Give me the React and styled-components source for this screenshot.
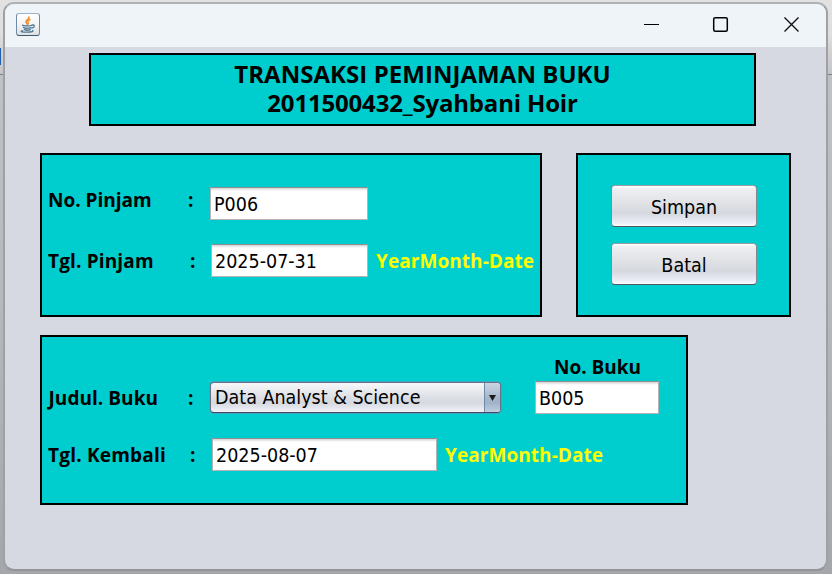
import React from "react";
import styled, { createGlobalStyle } from "styled-components";

const Global = createGlobalStyle`
  * { box-sizing: border-box; }
  body { margin: 0; }
`;

const Desktop = styled.div`
  width: 832px;
  height: 574px;
  overflow: hidden;
  padding: 2px 4px 3px 3px;
  background:
    linear-gradient(#1f5fae, #1f5fae) 0 48px / 1px 17px no-repeat,
    linear-gradient(to bottom, #e2e2e2 0, #dedede 36px, #d2d2d3 50px, #c4c5c8 74px, #7d8085 74px, #7d8085 75px, #c0c1c4 75px, #b7b8ba 300px, #a5a6a9 574px);
`;

const Window = styled.div`
  width: 825px;
  height: 569px;
  border: 2px solid;
  border-color: #b0b1b2 #a0a1a4 #939498 #a0a1a4;
  border-radius: 11px;
  background: #d6d9e1;
  overflow: hidden;
`;

const TitleBar = styled.header`
  height: 43px;
  padding: 0 26px 2px 11px;
  background: #eff4f9;
  display: flex;
  align-items: center;
  justify-content: space-between;
`;

const AppIcon = styled.div`
  width: 24px;
  height: 23px;
  margin-bottom: 1px;
  border: 1px solid #6f8ba6;
  border-top-color: #9db3cc;
  border-bottom-color: #3c5a72;
  border-radius: 3px;
  background: linear-gradient(to bottom, #fff, #f4f4f4 50%, #e0e0e0);
`;

const Controls = styled.div`
  display: grid;
  grid-template-columns: 15px 15px 17px;
  column-gap: 54px;
  align-items: center;

  svg:last-child { margin-left: 1px; }
`;

const Content = styled.main`
  padding: 6px 35px 0 35px;
`;

const Panel = styled.section`
  width: ${(p) => p.$w}px;
  height: ${(p) => p.$h}px;
  border: 2px solid #000;
  background: #00cdcd;
`;

const Heading = styled(Panel)`
  margin: 0 0 27px 49px;
  padding-top: 4px;
`;

const TopRow = styled.div`
  display: flex;
  gap: 34px;
  margin-bottom: 18px;
`;

const FormPanel = styled(Panel)`
  padding: ${(p) => p.$top}px 0 0 6px;
`;

const Row = styled.div`
  display: flex;
  align-items: flex-start;
  height: ${(p) => p.$h}px;
`;

const Bold = styled.span`
  font: 700 ${(p) => p.$size || 19}px / ${(p) => p.$line || 28}px "Open Sans", "Noto Sans", sans-serif;
  letter-spacing: ${(p) => p.$track || 0}px;
  white-space: pre;
  color: #000;
`;

const TitleLine = styled(Bold)`
  display: block;
  text-align: center;
`;

const Label = styled(Bold)`
  width: ${(p) => p.$w}px;
  margin-top: ${(p) => p.$mt || 0}px;
  padding-left: ${(p) => p.$pl || 0}px;
`;

const Hint = styled(Label)`
  color: #ff0;
  margin-left: 8px;
`;

const Regular = styled.span`
  font: 400 19.5px / 28px "DejaVu Sans Condensed", "DejaVu Sans", sans-serif;
  white-space: pre;
  color: #000;
`;

const Field = styled.div`
  width: ${(p) => p.$w}px;
  height: 33px;
  margin-top: ${(p) => p.$mt || 0}px;
  padding: 3px 3px 0;
  border: 1px solid #b5b3b5;
  border-top-color: #8f8f92;
  background: linear-gradient(to bottom, #d4d4d6 0, #fff 3px);
`;

const Combo = styled.div`
  width: 291px;
  height: 31px;
  margin-top: 1px;
  display: flex;
  justify-content: space-between;
  border: 1px solid #6e7085;
  border-bottom-color: #454760;
  border-radius: 4px;
  box-shadow: 0 0 0 1px #3fa5c6;
  overflow: hidden;
  padding-left: 4px;
  background: linear-gradient(to bottom, #f8f8fa, #dcdfe5 50%, #d5d8df 68%, #f0f2f8);
`;

const ComboText = styled(Regular)`
  padding-top: 1px;
`;

const ComboArrow = styled.div`
  width: 16px;
  display: flex;
  align-items: center;
  justify-content: center;
  border-left: 1px solid #7289a6;
  background: linear-gradient(to bottom, #cbd5e2, #a5b7cb 50%, #9fb2c7 68%, #bdcfe2);
`;

const BookNo = styled.div`
  display: flex;
  flex-direction: column;
  margin: -30px 0 0 34px;
`;

const Actions = styled(Panel)`
  padding: 30px 0 0 33px;
  display: flex;
  flex-direction: column;
  gap: 16px;
`;

const Button = styled.button`
  width: 146px;
  height: 42px;
  padding: 3px 0 0;
  border: 1px solid #85888f;
  border-top-color: #9b9da2;
  border-bottom-color: #54575f;
  border-radius: 4px;
  background: linear-gradient(to bottom, #fff 0, #eeeff2 8%, #dfe1e5 45%, #d5d8df 68%, #eef1f9 94%, #fff);
`;

function JavaIcon() {
  return (
    <AppIcon>
      <svg width="22" height="21" viewBox="0 0 22 21" fill="none" strokeLinecap="round" display="block">
        <path d="M11.900 3.200c1 2-3.600 3-2.800 5 .3.8 1.300 1.200 1.300 2.300" stroke="#ee8a2c" strokeWidth="1.700" />
        <path d="M13.200 5.600c-2 .8-2.700 1.500-2 2.600.6.9.3 1.400-.3 2" stroke="#ee8a2c" strokeWidth="1.200" />
        <path d="M5.800 11.200c-1.200.8 8 .9 9.200 0M6.600 13.500c1 1 6 1 7.400 0M7.600 15.600c1 .9 4 .9 5.600 0" stroke="#4f7896" strokeWidth="1.400" />
        <path d="M15.200 11.100c2.800-.9 2.900 2.200-.4 3.100" stroke="#4f7896" strokeWidth="1.300" />
        <path d="M5.800 16.600c-4.400 1.300 1 1.700 4.800 1.600 4-.1 6.600-.8 5-1.700" stroke="#4f7896" strokeWidth="1.200" />
      </svg>
    </AppIcon>
  );
}

export default function App() {
  return (
    <>
      <Global />
      <Desktop>
        <Window>
          <TitleBar>
            <JavaIcon />
            <Controls>
              <svg width="15" height="15" viewBox="1 0 15 15" overflow="visible"><path d="M0 7.500h15" stroke="#000" /></svg>
              <svg width="15" height="15" viewBox="1 0 15 15" fill="none" overflow="visible">
                <rect x="0.700" y="0.700" width="13.600" height="13.600" rx="1.500" stroke="#000" strokeWidth="1.500" />
              </svg>
              <svg width="17" height="17" viewBox="1 0 17 17" overflow="visible"><path d="M1.500 1.500l14 14M15.500 1.500l-14 14" stroke="#111" strokeWidth="1.400" /></svg>
            </Controls>
          </TitleBar>
          <Content>
            <Heading $w={667} $h={73}>
              <TitleLine $size={24} $line={29} $track={0.05}>TRANSAKSI PEMINJAMAN BUKU</TitleLine>
              <TitleLine $size={24} $line={29} $track={-0.18}>2011500432_Syahbani Hoir</TitleLine>
            </Heading>
            <TopRow>
              <FormPanel $w={502} $h={164} $top={31}>
                <Row $h={57}>
                  <Label $w={140}>No. Pinjam</Label>
                  <Label $w={22}>:</Label>
                  <Field $w={158} $mt={1}><Regular>P006</Regular></Field>
                </Row>
                <Row $h={57}>
                  <Label $w={142} $track={0.15} $mt={4}>Tgl. Pinjam</Label>
                  <Label $w={21} $mt={4}>:</Label>
                  <Field $w={157} $mt={1}><Regular>2025-07-31</Regular></Field>
                  <Hint $mt={4} $track={0.06}>YearMonth-Date</Hint>
                </Row>
              </FormPanel>
              <Actions $w={215} $h={164}>
                <Button><Regular>Simpan</Regular></Button>
                <Button><Regular>Batal</Regular></Button>
              </Actions>
            </TopRow>
            <FormPanel $w={648} $h={170} $top={44}>
              <Row $h={57}>
                <Label $w={140} $pl={0.5} $mt={3} $track={0.05}>Judul. Buku</Label>
                <Label $w={22} $mt={3}>:</Label>
                <Combo>
                  <ComboText>Data Analyst &amp; Science</ComboText>
                  <ComboArrow>
                    <svg width="7" height="6" viewBox="0 0 7 6"><path d="M0 0h7L3.500 6z" fill="#1c1c1c" /></svg>
                  </ComboArrow>
                </Combo>
                <BookNo>
                  <Label $w={105} $pl={19} $mt={2}>No. Buku</Label>
                  <Field $w={124}><Regular>B005</Regular></Field>
                </BookNo>
              </Row>
              <Row $h={57}>
                <Label $w={142} $track={0.2} $mt={3}>Tgl. Kembali</Label>
                <Label $w={22} $mt={3}>:</Label>
                <Field $w={225}><Regular>2025-08-07</Regular></Field>
                <Hint $mt={3} $track={0.06}>YearMonth-Date</Hint>
              </Row>
            </FormPanel>
          </Content>
        </Window>
      </Desktop>
    </>
  );
}
